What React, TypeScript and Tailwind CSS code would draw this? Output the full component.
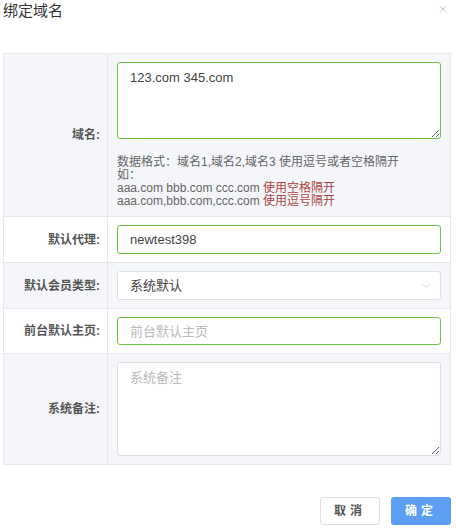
import { ChevronDown, X } from "lucide-react"

const font = { fontFamily: '"Liberation Sans", "Noto Sans CJK SC", sans-serif' }

function Row({
  label,
  striped,
  children,
  last,
}: {
  label: string
  striped?: boolean
  children: React.ReactNode
  last?: boolean
}) {
  return (
    <div
      className={`flex border-[#e6e8ee] ${last ? "" : "border-b"} ${striped ? "bg-[#f5f6fa]" : "bg-white"}`}
    >
      <div className="w-[104px] shrink-0 flex items-center justify-end pr-[7px] border-r border-[#e6e8ee] text-[12px] font-bold text-[#555]">
        {label}
      </div>
      <div className="flex-1 px-[9px] py-[8px]">{children}</div>
    </div>
  )
}

export default function App() {
  return (
    <div className="w-[456px] h-[529px] bg-white relative" style={font}>
      {/* header */}
      <div className="flex items-start justify-between pl-[3px] pr-[7px] pt-[1px]">
        <h3 className="text-[15px] leading-[20px] text-[#333]">绑定域名</h3>
        <X className="mt-[2px] h-[12px] w-[12px] text-[#aaa]" strokeWidth={1.3} />
      </div>

      {/* form table */}
      <div className="mt-[32px] mx-[3px] w-[448px] border border-[#e6e8ee]">
        <Row label="域名:" striped>
          <textarea
            defaultValue="123.com 345.com"
            className="block w-full h-[77px] rounded-[3px] border border-[#6cc644] bg-white px-[12px] py-[5px] text-[13px] text-[#444] outline-none resize-y"
          />
          <div className="mt-[17px] text-[12px] leading-[13px] text-[#666]">
            <div>数据格式：域名1,域名2,域名3 使用逗号或者空格隔开</div>
            <div>如：</div>
            <div>
              aaa.com bbb.com ccc.com <span className="text-[#a94442]">使用空格隔开</span>
            </div>
            <div>
              aaa.com,bbb.com,ccc.com <span className="text-[#a94442]">使用逗号隔开</span>
            </div>
          </div>
        </Row>
        <Row label="默认代理:">
          <input
            defaultValue="newtest398"
            className="block w-full h-[29px] rounded-[3px] border border-[#6cc644] bg-white px-[12px] text-[13px] text-[#444] outline-none"
          />
        </Row>
        <Row label="默认会员类型:" striped>
          <div className="flex h-[29px] items-center justify-between rounded-[3px] border border-[#dcdfe6] bg-white pl-[12px] pr-[8px] text-[13px] text-[#444]">
            <span>系统默认</span>
            <ChevronDown className="h-[12px] w-[12px] text-[#c0c4cc]" strokeWidth={1.5} />
          </div>
        </Row>
        <Row label="前台默认主页:">
          <input
            placeholder="前台默认主页"
            className="block w-full h-[28px] rounded-[3px] border border-[#6cc644] bg-white px-[12px] text-[13px] text-[#444] placeholder:text-[#bbb] outline-none"
          />
        </Row>
        <Row label="系统备注:" striped last>
          <textarea
            placeholder="系统备注"
            className="block w-full h-[94px] rounded-[3px] border border-[#dcdfe6] bg-white px-[12px] py-[5px] text-[13px] text-[#444] placeholder:text-[#bbb] outline-none resize-y"
          />
        </Row>
      </div>

      {/* footer */}
      <div className="mt-[32px] flex justify-end gap-[11px] pr-[5px]">
        <button className="h-[28px] w-[60px] rounded-[3px] border border-[#dcdfe6] bg-white text-[12px] font-bold tracking-[4px] text-[#555]">
          取消
        </button>
        <button className="h-[28px] w-[60px] rounded-[3px] bg-[#5b9ef4] text-[12px] font-bold tracking-[4px] text-white">
          确定
        </button>
      </div>
    </div>
  )
}
